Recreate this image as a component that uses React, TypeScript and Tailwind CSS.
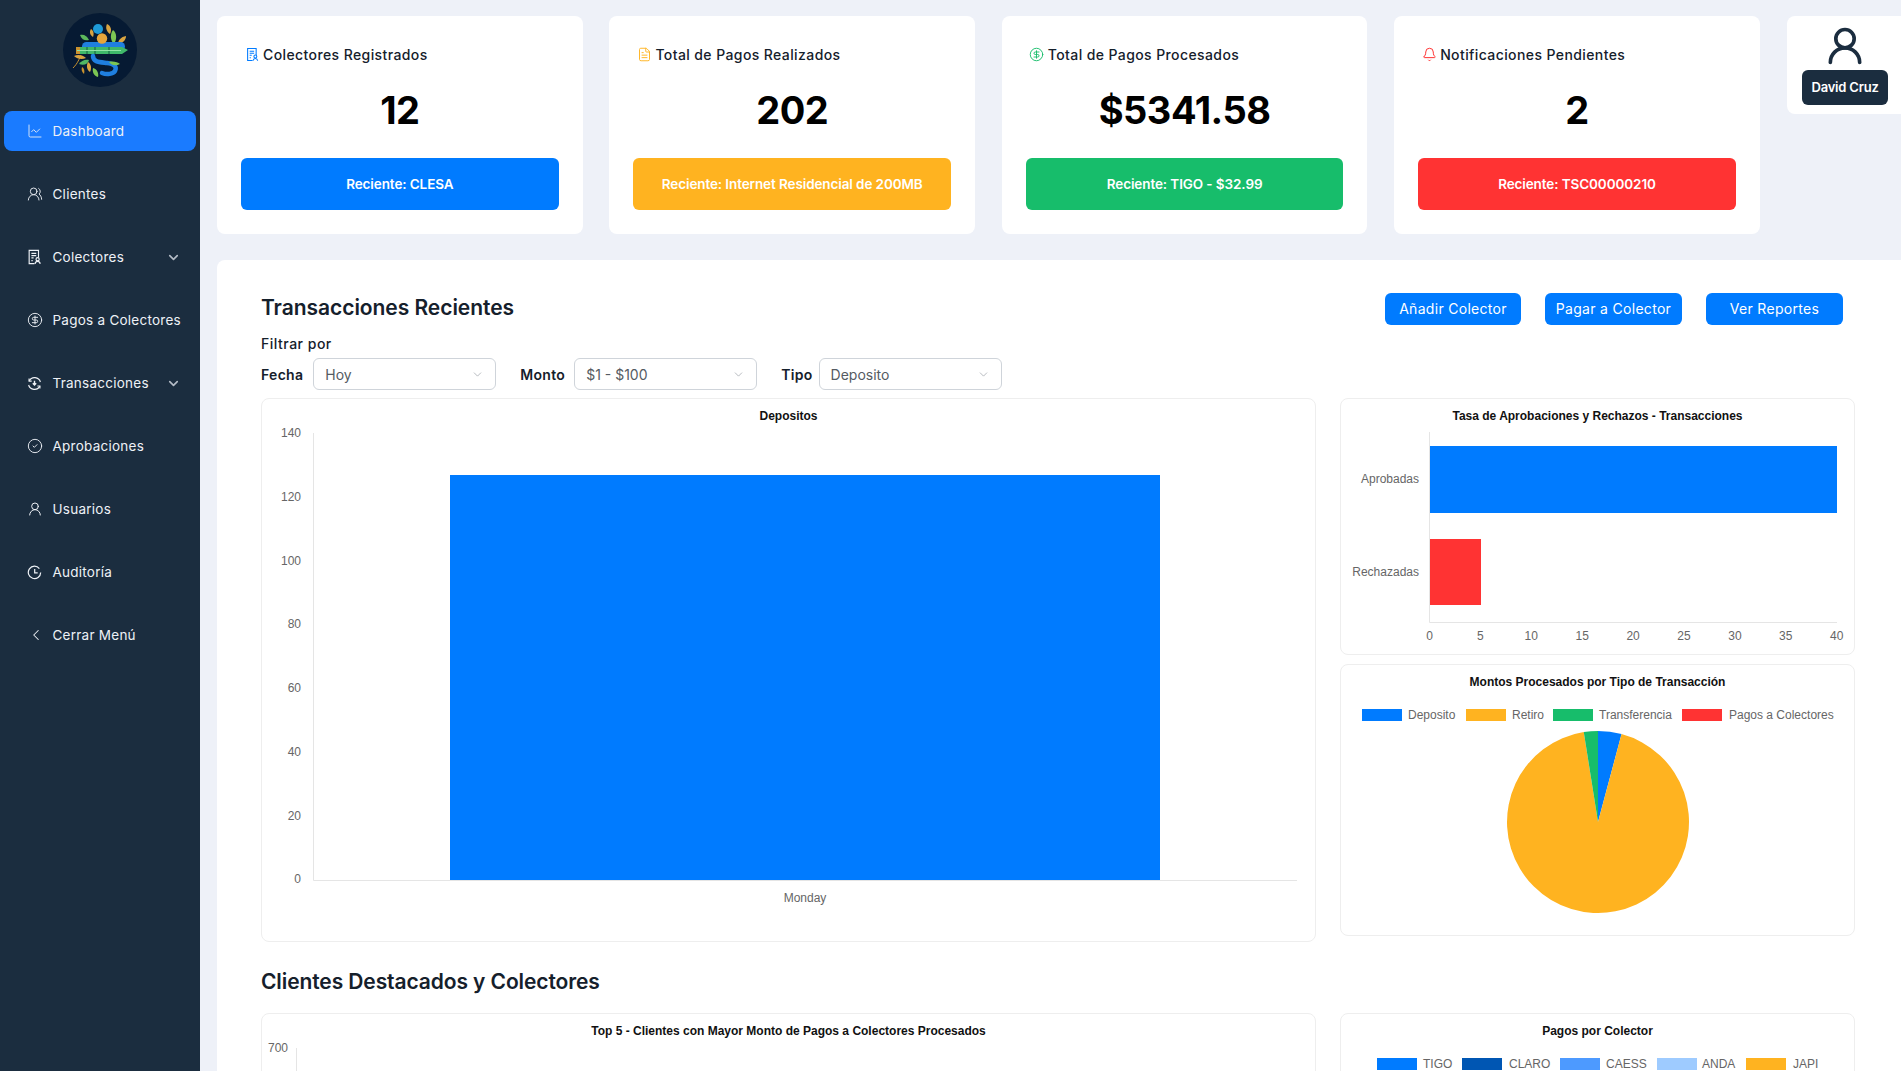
import { ChartLine, ChevronDown, ChevronLeft, CircleCheck, CircleDollarSign, UserRound, UsersRound, Bell, FileText } from 'lucide-react'
import type { ReactNode } from 'react'

function CollectorIcon({ className }: { className?: string }) {
  return (
    <svg viewBox="0 0 16 18" fill="none" stroke="currentColor" strokeWidth="1.3" className={className}>
      <path d="M8 16.5H2V1.5h10.5v8" />
      <path d="M4.5 5h5.5M4.5 7.5h5.5M4.5 10h2.5M4.5 13h1.5" />
      <circle cx="11.5" cy="11.5" r="1.8" />
      <path d="M8.6 16.7c.3-1.8 1.4-2.7 2.9-2.7s2.6.9 2.9 2.7" />
    </svg>
  )
}

function TransactionIcon({ className }: { className?: string }) {
  return (
    <svg viewBox="0 0 16 16" fill="none" stroke="currentColor" strokeWidth="1.2" className={className}>
      <path d="M2.3 5.2A6.5 6.5 0 0 1 14.3 6.4" />
      <path d="M13.7 10.8A6.5 6.5 0 0 1 1.7 9.6" />
      <path d="M2.2 2.6v2.8H5M13.8 13.4v-2.8H11" />
      <path d="M8 5v4.4M6.2 7.7 8 9.6l1.8-1.9" strokeWidth="1.5" />
    </svg>
  )
}

function AuditIcon({ className }: { className?: string }) {
  return (
    <svg viewBox="0 0 16 16" fill="none" stroke="currentColor" strokeWidth="1.3" className={className}>
      <path d="M13.2 3.8A6.6 6.6 0 1 0 14.6 8" />
      <path d="M8.2 4.2v4.2h3.2" />
    </svg>
  )
}

function Logo() {
  return (
    <svg viewBox="0 0 74 74" className="w-[74px] h-[74px]">
      <circle cx="37" cy="37" r="37" fill="#061a33" />
      <path d="M10 55c5-5 6-9 8-13" stroke="#c9922f" strokeWidth="1" fill="none" />
      <circle cx="35" cy="16" r="5" fill="#1e9bd8" />
      <path d="M17 22c4-1 7 1 9 5-4 1-7 0-9-5Z" fill="#5cb85c" />
      <path d="M28 16c3 2 3 5 2 8-3-2-4-5-2-8Z" fill="#d9a441" />
      <path d="M44 11c4 2 5 6 3 10-3-2-5-6-3-10Z" fill="#d9a441" />
      <path d="M50 17c4 3 4 9 1 14-4-4-4-10-1-14Z" fill="#7cc653" />
      <path d="M63 23c0 4-3 7-8 8 0-4 3-7 8-8Z" fill="#d9a441" />
      <rect x="19" y="29" width="43" height="9" rx="4.5" fill="#1f7fe0" />
      <circle cx="39" cy="25.5" r="5.2" fill="#e6a53a" />
      <path d="M13 34h46l6 3-6 4H13Z" fill="#3fb86a" />
      <rect x="13" y="34" width="4" height="7" fill="#c9922f" />
      <path d="M24 34v7M32 34v7M46 34v7" stroke="#1b6b48" strokeWidth="1.2" />
      <path d="M14 37.5h44" stroke="#8fe3a5" strokeWidth="1" />
      <path d="M30 43c0 6 6 6 14 7 8 1 10 4 8 8-2 3-8 4-13 2" stroke="#1f7fe0" strokeWidth="4.5" fill="none" strokeLinecap="round" />
      <path d="M11 43c4-2 9-1 12 2-4 2-9 1-12-2Z" fill="#d9a441" />
      <path d="M16 51c2-3 6-5 10-4-1 4-5 6-10 4Z" fill="#4fb765" />
      <path d="M25 49c3 2 4 6 2 10-3-2-4-6-2-10Z" fill="#d9a441" />
      <path d="M30 55c4 1 6 5 5 9-4-1-6-5-5-9Z" fill="#7cc653" />
      <path d="M19 54c2 1 3 4 2 7-2-2-3-4-2-7Z" fill="#c9922f" />
      <path d="M46 49c4-1 9 0 11 2-4 2-8 2-11-2Z" fill="#7cc653" />
    </svg>
  )
}

const navItems = [
  { label: 'Dashboard', icon: <ChartLine className="w-[16px] h-[16px]" strokeWidth={1.3} />, active: true },
  { label: 'Clientes', icon: <UsersRound className="w-[16px] h-[16px]" strokeWidth={1.4} /> },
  { label: 'Colectores', icon: <CollectorIcon className="w-[15px] h-[16px]" />, caret: true },
  { label: 'Pagos a Colectores', icon: <CircleDollarSign className="w-[16px] h-[16px]" strokeWidth={1.4} /> },
  { label: 'Transacciones', icon: <TransactionIcon className="w-[15px] h-[15px]" />, caret: true },
  { label: 'Aprobaciones', icon: <CircleCheck className="w-[16px] h-[16px]" strokeWidth={1.4} /> },
  { label: 'Usuarios', icon: <UserRound className="w-[16px] h-[16px]" strokeWidth={1.5} /> },
  { label: 'Auditoría', icon: <AuditIcon className="w-[15px] h-[15px]" /> },
  { label: 'Cerrar Menú', icon: <ChevronLeft className="w-[18px] h-[18px]" strokeWidth={1.4} /> },
]

function Sidebar() {
  return (
    <aside className="w-[200px] shrink-0 bg-[#1b2d3f] flex flex-col items-center pt-[13px]">
      <Logo />
      <nav className="w-full flex flex-col gap-[23px] mt-[24px] px-[4px]">
        {navItems.map((item) => (
          <div
            key={item.label}
            className={`h-[40px] flex items-center rounded-lg pl-[23px] pr-[15px] text-[13.5px] tracking-[0.25px] text-[#eef1f6] ${item.active ? 'bg-[#1a7bff]' : ''}`}
          >
            <span className="w-[25.5px] shrink-0 flex items-center">{item.icon}</span>
            <span className="flex-1 whitespace-nowrap">{item.label}</span>
            {item.caret && <ChevronDown className="w-[15px] h-[15px] text-[#b4bcc6]" strokeWidth={2.6} />}
          </div>
        ))}
      </nav>
    </aside>
  )
}

const stats = [
  { title: 'Colectores Registrados', value: '12', recent: 'Reciente: CLESA', color: 'bg-[#007bff]', icon: <CollectorIcon className="w-[13px] h-[15px] text-[#007bff]" /> },
  { title: 'Total de Pagos Realizados', value: '202', recent: 'Reciente: Internet Residencial de 200MB', color: 'bg-[#ffb320]', icon: <FileText className="w-[15px] h-[15px] text-[#ffb320]" strokeWidth={1.5} /> },
  { title: 'Total de Pagos Procesados', value: '$5341.58', recent: 'Reciente: TIGO - $32.99', color: 'bg-[#17bd6b]', icon: <CircleDollarSign className="w-[15px] h-[15px] text-[#17bd6b]" strokeWidth={1.5} /> },
  { title: 'Notificaciones Pendientes', value: '2', recent: 'Reciente: TSC00000210', color: 'bg-[#ff3333]', icon: <Bell className="w-[15px] h-[15px] text-[#ff3333]" strokeWidth={1.6} /> },
]

function StatCard({ stat }: { stat: (typeof stats)[number] }) {
  return (
    <div className="w-[365.7px] h-[218px] shrink-0 bg-white rounded-lg px-[24px] pt-[29px]">
      <div className="flex items-center h-[18px] text-[14px] font-medium tracking-[0.4px] text-[#15202b]">
        <span className="w-[22px] flex justify-center">{stat.icon}</span>
        {stat.title}
      </div>
      <div className="h-[44px] mt-[25px] flex items-center justify-center text-[38px] font-bold tracking-[-0.5px] text-black">
        {stat.value}
      </div>
      <div className={`h-[52px] mt-[26px] rounded-md flex items-center justify-center text-[13.5px] font-semibold tracking-[-0.1px] text-white ${stat.color}`}>
        {stat.recent}
      </div>
    </div>
  )
}

function FilterSelect({ label, value, gap }: { label: string; value: string; gap: string }) {
  return (
    <div className={`flex items-center ${gap}`}>
      <span className="text-[14px] font-semibold tracking-[0.3px] text-[#15202b]">{label}</span>
      <div className="w-[183px] h-[32px] flex items-center justify-between border border-[#cfd4da] rounded-md pl-[11px] pr-[11px] text-[14px] text-[#555b62]">
        {value}
        <ChevronDown className="w-[13px] h-[13px] text-[#9aa0a6]" strokeWidth={1.3} />
      </div>
    </div>
  )
}

function ActionButton({ label, width }: { label: string; width: string }) {
  return (
    <div className={`h-[32px] rounded-md bg-[#007bff] text-white text-[14px] tracking-[0.3px] flex items-center justify-center ${width}`}>
      {label}
    </div>
  )
}

function ChartBox({ title, height, children }: { title: string; height: string; children?: ReactNode }) {
  return (
    <div className={`bg-white border border-[#eeeeee] rounded-lg pt-[10px] overflow-hidden ${height}`}>
      <div className="h-[14px] text-center text-[12px] leading-[14px] font-bold font-['Liberation_Sans',Arial,sans-serif] text-[#111]">{title}</div>
      {children}
    </div>
  )
}

const axisText = { fontFamily: '"Liberation Sans", Arial, sans-serif', fontSize: 12, fill: '#666666' }

function DepositChart() {
  const ticks = [140, 120, 100, 80, 60, 40, 20, 0]
  return (
    <svg width="1053" height="517" className="block">
      <rect x="188" y="52" width="710" height="405" fill="#007bff" />
      <path d="M51.5 10V457.5H1035" fill="none" stroke="#e5e5e5" />
      {ticks.map((t, i) => (
        <text key={t} x="39" y={14 + i * 63.75} textAnchor="end" style={axisText}>{t}</text>
      ))}
      <text x="543" y="479" textAnchor="middle" style={axisText}>Monday</text>
    </svg>
  )
}

function RateChart() {
  const ticks = [0, 5, 10, 15, 20, 25, 30, 35, 40]
  return (
    <svg width="513" height="231" className="block">
      <rect x="89" y="23" width="407" height="67" fill="#007bff" />
      <rect x="89" y="116" width="51" height="66" fill="#ff3333" />
      <path d="M88.5 9V199.5H496" fill="none" stroke="#e5e5e5" />
      <text x="78" y="60" textAnchor="end" style={axisText}>Aprobadas</text>
      <text x="78" y="153" textAnchor="end" style={axisText}>Rechazadas</text>
      {ticks.map((t, i) => (
        <text key={t} x={88.5 + i * 50.9} y="217" textAnchor="middle" style={axisText}>{t}</text>
      ))}
    </svg>
  )
}

function Legend({ items, y }: { items: { label: string; x: number; text: number; color: string }[]; y: number }) {
  return (
    <>
      {items.map((item) => (
        <g key={item.label}>
          <rect x={item.x} y={y - 6} width="40" height="12" fill={item.color} />
          <text x={item.text} y={y + 4} style={axisText}>{item.label}</text>
        </g>
      ))}
    </>
  )
}

function polar(angle: number) {
  const r = (angle * Math.PI) / 180
  return `${257 + 91 * Math.sin(r)} ${133 - 91 * Math.cos(r)}`
}

function PieChart() {
  const items = [
    { label: 'Deposito', x: 21, text: 67, color: '#007bff' },
    { label: 'Retiro', x: 125, text: 171, color: '#ffb320' },
    { label: 'Transferencia', x: 212, text: 258, color: '#17bd6b' },
    { label: 'Pagos a Colectores', x: 341, text: 388, color: '#ff3333' },
  ]
  return (
    <svg width="513" height="245" className="block">
      <Legend items={items} y={26} />
      <path d={`M257 133L${polar(0)}A91 91 0 0 1 ${polar(15)}Z`} fill="#007bff" />
      <path d={`M257 133L${polar(15)}A91 91 0 1 1 ${polar(351)}Z`} fill="#ffb320" />
      <path d={`M257 133L${polar(351)}A91 91 0 0 1 ${polar(360)}Z`} fill="#17bd6b" />
    </svg>
  )
}

function CollectorChart() {
  const items = [
    { label: 'TIGO', x: 36, text: 82, color: '#007bff' },
    { label: 'CLARO', x: 121, text: 168, color: '#0056b3' },
    { label: 'CAESS', x: 219, text: 265, color: '#4d9aff' },
    { label: 'ANDA', x: 316, text: 361, color: '#9ecbff' },
    { label: 'JAPI', x: 405, text: 452, color: '#ffb320' },
  ]
  return (
    <svg width="513" height="40" className="block">
      <Legend items={items} y={26} />
    </svg>
  )
}

export default function App() {
  return (
    <div className="h-screen overflow-hidden flex bg-[#eef1f8] font-['Inter','Liberation_Sans',sans-serif]">
      <Sidebar />
      <main className="flex-1 min-w-0 pl-[17px] pt-[16px]">
        <div className="flex items-start gap-[26.7px]">
          {stats.map((stat) => (
            <StatCard key={stat.title} stat={stat} />
          ))}
          <div className="w-[117px] h-[98px] shrink-0 bg-white rounded-l-lg flex flex-col items-center pt-[8px]">
            <UserRound className="w-[44px] h-[44px] text-[#1b2d3f]" strokeWidth={2} />
            <div className="w-[86px] h-[35px] mt-[2px] rounded-md bg-[#1b2d3f] text-white text-[13px] font-semibold tracking-[-0.2px] flex items-center justify-center">
              David Cruz
            </div>
          </div>
        </div>

        <section className="mt-[26px] h-[900px] bg-white rounded-l-lg pl-[44px] pr-[46px] pt-[32px]">
          <div className="flex items-center justify-between h-[33px] pr-[12px]">
            <h2 className="mb-[2px] text-[21px] font-semibold tracking-[-0.05px] text-[#15202b]">Transacciones Recientes</h2>
            <div className="flex gap-[24px]">
              <ActionButton label="Añadir Colector" width="w-[136px]" />
              <ActionButton label="Pagar a Colector" width="w-[137px]" />
              <ActionButton label="Ver Reportes" width="w-[137px]" />
            </div>
          </div>
          <div className="mt-[8px] h-[18px] text-[14px] font-medium tracking-[0.5px] text-[#15202b]">Filtrar por</div>
          <div className="mt-[7px] flex items-center gap-[24px]">
            <FilterSelect label="Fecha" value="Hoy" gap="gap-[10px]" />
            <FilterSelect label="Monto" value="$1 - $100" gap="gap-[9px]" />
            <FilterSelect label="Tipo" value="Deposito" gap="gap-[6px]" />
          </div>
          <div className="mt-[8px] grid grid-cols-[1055px_515px] gap-x-[24px]">
            <ChartBox title="Depositos" height="h-[544px]">
              <DepositChart />
            </ChartBox>
            <div className="flex flex-col gap-[9px]">
              <ChartBox title="Tasa de Aprobaciones y Rechazos - Transacciones" height="h-[257px]">
                <RateChart />
              </ChartBox>
              <ChartBox title="Montos Procesados por Tipo de Transacción" height="h-[272px]">
                <PieChart />
              </ChartBox>
            </div>
          </div>
          <h2 className="mt-[27px] h-[26px] leading-[26px] text-[21px] font-semibold tracking-[-0.1px] text-[#15202b]">Clientes Destacados y Colectores</h2>
          <div className="mt-[18px] grid grid-cols-[1055px_515px] gap-x-[24px]">
            <ChartBox title="Top 5 - Clientes con Mayor Monto de Pagos a Colectores Procesados" height="h-[300px]">
              <svg width="1053" height="60" className="block">
                <path d="M34.5 10V60" fill="none" stroke="#e5e5e5" />
                <text x="26" y="14" textAnchor="end" style={axisText}>700</text>
              </svg>
            </ChartBox>
            <ChartBox title="Pagos por Colector" height="h-[300px]">
              <CollectorChart />
            </ChartBox>
          </div>
        </section>
      </main>
    </div>
  )
}
